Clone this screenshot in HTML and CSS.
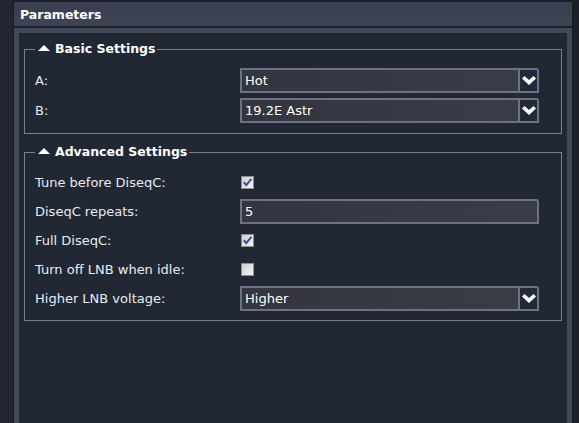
FILE: index.html
```html
<!DOCTYPE html>
<html lang="en">
<head>
    <meta charset="UTF-8">
    <meta name="viewport" content="width=device-width, initial-scale=1.0">
    <title>Parameters</title>
    <link rel="stylesheet" href="styles.css">
</head>
<body>
    <div class="panel">
        <div class="panel-header">Parameters</div>
        <div class="panel-body">
            <fieldset class="group">
                <legend><span class="caret"></span>Basic Settings</legend>
                <div class="fields basic">
                    <label>A:</label>
                    <div class="select">
                        <span class="value">Hot</span>
                        <span class="arrow"><svg width="14" height="9" viewBox="0 0 14 9"><polygon points="0,2.5 2.5,0 7,4 11.5,0 14,2.5 7,9" fill="#fff"/></svg></span>
                    </div>
                    <label>B:</label>
                    <div class="select">
                        <span class="value">19.2E Astr</span>
                        <span class="arrow"><svg width="14" height="9" viewBox="0 0 14 9"><polygon points="0,2.5 2.5,0 7,4 11.5,0 14,2.5 7,9" fill="#fff"/></svg></span>
                    </div>
                </div>
            </fieldset>

            <fieldset class="group">
                <legend><span class="caret"></span>Advanced Settings</legend>
                <div class="fields advanced">
                    <label>Tune before DiseqC:</label>
                    <div><span class="check"><svg width="11" height="11" viewBox="0 0 11 11"><path d="M1.8 5.2 L4.2 8.2 L9.4 1.8" fill="none" stroke="#3f4f9f" stroke-width="2"/></svg></span></div>
                    <label>DiseqC repeats:</label>
                    <div class="text-box">5</div>
                    <label>Full DiseqC:</label>
                    <div><span class="check"><svg width="11" height="11" viewBox="0 0 11 11"><path d="M1.8 5.2 L4.2 8.2 L9.4 1.8" fill="none" stroke="#3f4f9f" stroke-width="2"/></svg></span></div>
                    <label>Turn off LNB when idle:</label>
                    <div><span class="check"></span></div>
                    <label>Higher LNB voltage:</label>
                    <div class="select">
                        <span class="value">Higher</span>
                        <span class="arrow"><svg width="14" height="9" viewBox="0 0 14 9"><polygon points="0,2.5 2.5,0 7,4 11.5,0 14,2.5 7,9" fill="#fff"/></svg></span>
                    </div>
                </div>
            </fieldset>
        </div>
    </div>
</body>
</html>
```

FILE: styles.css
```css
html, body {
    height: 100%;
}
body {
    margin: 0;
    background-color: #22272f;
    color: #e9ecf1;
    font-family: "DejaVu Sans", Verdana, sans-serif;
    font-size: 13px;
    overflow: hidden;
}
.panel {
    display: flex;
    flex-direction: column;
    height: 100%;
    margin: 0 6px 0 13px;
    border: 1px solid #171a21;
    border-top: 2px solid #1b1f27;
    border-bottom: none;
    box-shadow: 6px 0 0 #1c2029;
}
.panel-header {
    height: 24px;
    line-height: 25px;
    padding-left: 6px;
    background: linear-gradient(#393e50 0%, #3a3f52 50%, #3e4356 55%, #3d4255 100%);
    border-bottom: 2px solid #1c2029;
    font-weight: bold;
    font-size: 12.5px;
    color: #ffffff;
}
.panel-body {
    flex: 1;
    background-color: #212733;
    border: 5px solid #444959;
    border-bottom: none;
    padding: 9px 5px 0 5px;
}
.group {
    margin: 0 0 11px 0;
    border: 1px solid #7b8090;
    padding: 12px 22px 10px 10px;
}
.group legend {
    padding: 0 2px 0 3px;
    line-height: 14px;
    font-weight: bold;
    font-size: 12.5px;
    color: #ffffff;
}
.caret {
    display: inline-block;
    width: 0;
    height: 0;
    border-left: 6px solid transparent;
    border-right: 6px solid transparent;
    border-bottom: 6px solid #ffffff;
    margin-right: 5px;
    vertical-align: 2px;
}
.fields {
    display: grid;
    grid-template-columns: 205px 1fr;
    grid-auto-rows: 25px;
    align-items: center;
}
.fields.basic {
    row-gap: 5px;
}
.fields.advanced {
    row-gap: 4px;
}
.group:last-child {
    padding-top: 11px;
    padding-bottom: 9px;
}
.fields > div {
    height: 100%;
    display: flex;
    align-items: center;
}
.select, .text-box {
    box-sizing: border-box;
    border: 2px solid #6c7284;
    border-top-right-radius: 3px;
    background: linear-gradient(90deg, #33363e, #3a3d46);
    color: #ffffff;
}
.select .value, .text-box {
    padding-left: 3px;
}
.select .value {
    flex: 1;
}
.select .arrow {
    width: 17px;
    height: 100%;
    border-left: 2px solid #6c7284;
    background-color: #222939;
    display: flex;
    align-items: center;
    justify-content: center;
}
.check {
    display: inline-block;
    width: 11px;
    height: 11px;
    margin-left: 1px;
    border: 1px solid #8c8d90;
    background: linear-gradient(135deg, #cfcfd1, #f5f5f5);
}
.check svg {
    display: block;
}
```
